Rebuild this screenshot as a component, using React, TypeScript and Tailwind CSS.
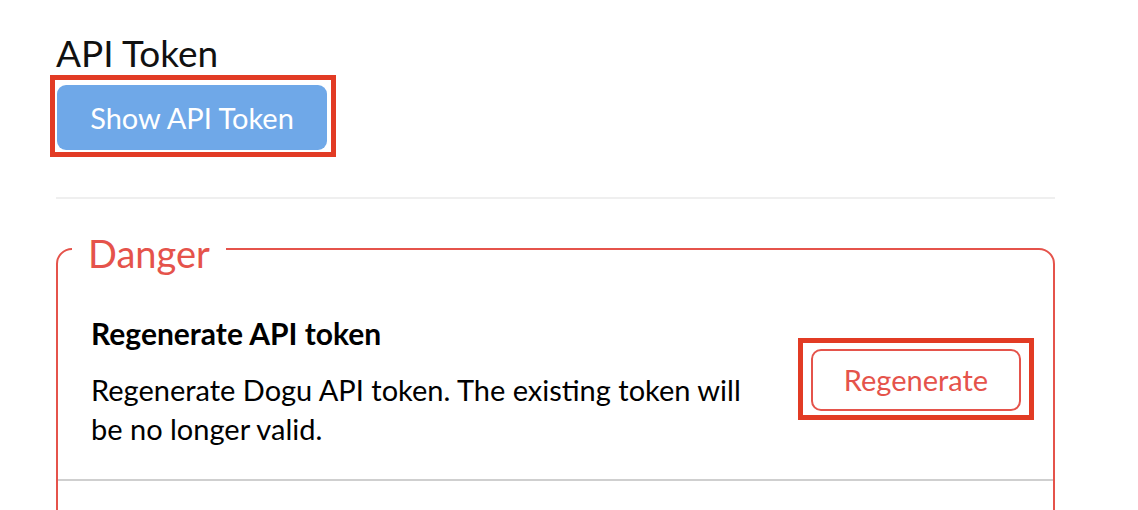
import React from "react";

const font = { fontFamily: "Lato, 'Noto Sans', sans-serif" };

const Highlight: React.FC<{ className: string }> = ({ className }) => (
  <span
    className={`pointer-events-none absolute border-[5px] border-[#e23b24] ${className}`}
  />
);

const App: React.FC = () => {
  return (
    <div
      className="w-[1138px] h-[510px] overflow-hidden bg-white pl-[56px] pt-[30px] text-black"
      style={font}
    >
      <div className="w-[999px]">
        <h1 className="text-[37px] leading-[46px] font-normal text-[#111]">API Token</h1>

        <div className="relative mt-[9px] inline-block">
          <Highlight className="-left-[6px] -top-[10px] -right-[9px] -bottom-[7px]" />
          <button className="ml-px h-[65px] w-[270px] rounded-[9px] bg-[#6fa8e8] text-[29px] text-white">
            Show API Token
          </button>
        </div>

        <div className="mt-[47px] h-[2px] bg-[#efefef]" />

        <fieldset className="mt-[24px] rounded-[16px] border-2 border-[#e5534b] p-0">
          <legend className="ml-[14px] px-[16px] pt-[8px] text-[38px] leading-[44px] text-[#e5534b]">
            Danger
          </legend>

          <div className="flex items-start justify-between border-b-2 border-[#cfcfcf] pl-[33px] pr-[32px] pt-[40px] pb-[31px]">
            <div className="w-[680px]">
              <h2 className="text-[30px] leading-[36px] font-bold">
                Regenerate API token
              </h2>
              <p className="mt-[19px] w-[680px] text-[29px] leading-[39px]">
                Regenerate Dogu API token. The existing token will be no longer valid.
              </p>
            </div>
            <div className="relative mt-[34px]">
              <Highlight className="-left-[13px] -top-[11px] -right-[13px] -bottom-[9px]" />
              <button className="h-[62px] w-[210px] rounded-[10px] border-2 border-[#e5534b] bg-white text-[29px] text-[#e5534b]">
                Regenerate
              </button>
            </div>
          </div>
          <div className="h-[80px]" />
        </fieldset>
      </div>
    </div>
  );
};

export default App;
